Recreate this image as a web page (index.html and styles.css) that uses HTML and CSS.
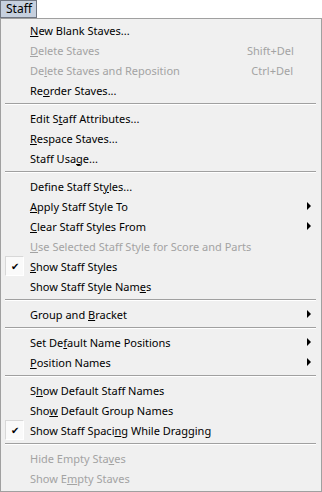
FILE: index.html
```html
<!DOCTYPE html>
<html lang="en">
<head>
  <meta charset="UTF-8">
  <title>Staff menu</title>
  <link rel="stylesheet" href="styles.css">
</head>
<body>
  <div class="menubar">
    <span class="menu-title">Staff</span>
  </div>

  <div class="menu">
    <div class="item"><span class="gutter"></span><span class="label"><u>N</u>ew Blank Staves...</span></div>
    <div class="item disabled"><span class="gutter"></span><span class="label"><u>D</u>elete Staves</span><span class="key">Shift+Del</span></div>
    <div class="item disabled"><span class="gutter"></span><span class="label">De<u>l</u>ete Staves and Reposition</span><span class="key">Ctrl+Del</span></div>
    <div class="item"><span class="gutter"></span><span class="label">Re<u>o</u>rder Staves...</span></div>
    <div class="sep"></div>

    <div class="item"><span class="gutter"></span><span class="label">Edit S<u>t</u>aff Attributes...</span></div>
    <div class="item"><span class="gutter"></span><span class="label"><u>R</u>espace Staves...</span></div>
    <div class="item"><span class="gutter"></span><span class="label">Staff Usa<u>g</u>e...</span></div>
    <div class="sep"></div>

    <div class="item"><span class="gutter"></span><span class="label">Define Staff St<u>y</u>les...</span></div>
    <div class="item"><span class="gutter"></span><span class="label"><u>A</u>pply Staff Style To</span><span class="arrow"></span></div>
    <div class="item"><span class="gutter"></span><span class="label"><u>C</u>lear Staff Styles From</span><span class="arrow"></span></div>
    <div class="item disabled"><span class="gutter"></span><span class="label"><u>U</u>se Selected Staff Style for Score and Parts</span></div>
    <div class="item"><span class="gutter"><span class="check">&#10004;</span></span><span class="label"><u>S</u>how Staff Styles</span></div>
    <div class="item"><span class="gutter"></span><span class="label">Show Staff Style Nam<u>e</u>s</span></div>
    <div class="sep"></div>

    <div class="item"><span class="gutter"></span><span class="label">Group and <u>B</u>racket</span><span class="arrow"></span></div>
    <div class="sep"></div>

    <div class="item"><span class="gutter"></span><span class="label">Set De<u>f</u>ault Name Positions</span><span class="arrow"></span></div>
    <div class="item"><span class="gutter"></span><span class="label"><u>P</u>osition Names</span><span class="arrow"></span></div>
    <div class="sep"></div>

    <div class="item"><span class="gutter"></span><span class="label">S<u>h</u>ow Default Staff Names</span></div>
    <div class="item"><span class="gutter"></span><span class="label">Sho<u>w</u> Default Group Names</span></div>
    <div class="item"><span class="gutter"><span class="check">&#10004;</span></span><span class="label">Show Staff Spaci<u>n</u>g While Dragging</span></div>
    <div class="sep"></div>

    <div class="item disabled"><span class="gutter"></span><span class="label">Hide Empty Sta<u>v</u>es</span></div>
    <div class="item disabled"><span class="gutter"></span><span class="label">Show E<u>m</u>pty Staves</span></div>
  </div>
</body>
</html>
```

FILE: styles.css
```css
* {
  margin: 0;
  padding: 0;
  box-sizing: border-box;
}
body {
  font-family: "Noto Sans", "Open Sans", sans-serif;
  font-size: 11px;
  color: #000;
  background: #fff;
  width: 322px;
}
.menubar {
  height: 18px;
  display: flex;
}
.menu-title {
  display: block;
  width: 37px;
  height: 18px;
  line-height: 15px;
  padding-left: 5px;
  font-size: 12px;
  background: #c6d0de;
  border: 1px solid #6f7580;
  color: #000;
}
.menu {
  background: #f0f0f0;
  border: 1px solid #a0a0a0;
  height: 474px;
  padding: 1px 0 3px;
}
.item {
  display: flex;
  align-items: center;
  height: 20px;
  padding-right: 4px;
}
.gutter {
  width: 29px;
  flex: none;
  display: flex;
  align-items: center;
  padding-left: 4px;
}
.check {
  display: block;
  width: 19px;
  height: 20px;
  line-height: 19px;
  text-align: center;
  font-size: 10px;
  background: #fafafa;
  border: 1px solid #d8d8d8;
  border-right-color: #fff;
  border-bottom-color: #fff;
}
.label {
  flex: 1;
  white-space: nowrap;
}
.key {
  width: 70px;
  text-align: right;
  padding-right: 24px;
  flex: none;
}
.arrow {
  flex: none;
  width: 0;
  height: 0;
  margin-right: 6px;
  border-top: 4px solid transparent;
  border-bottom: 4px solid transparent;
  border-left: 4px solid #000;
}
.disabled {
  color: #a3a3a3;
}
.sep {
  height: 8px;
  margin: 0 5px 0 4px;
  position: relative;
}
.sep::before {
  content: "";
  display: block;
  position: absolute;
  top: 3px;
  left: 0;
  right: 0;
  border-top: 1px solid #a0a0a0;
  border-bottom: 1px solid #fff;
}
```
